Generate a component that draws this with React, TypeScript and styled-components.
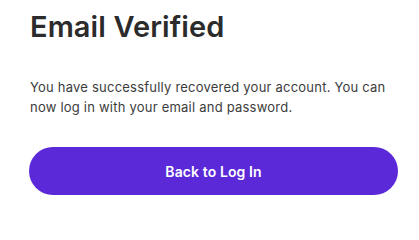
import React from "react";
import styled, { createGlobalStyle } from "styled-components";

const Global = createGlobalStyle`
  html, body { margin: 0; padding: 0; background: #ffffff; }
  body { font-family: Inter, "Noto Sans", sans-serif; -webkit-font-smoothing: antialiased; }
`;

const Page = styled.main`
  display: flex;
  flex-direction: column;
  width: 369px;
  padding: 9px 0 0 29px;
`;

const Title = styled.h1`
  margin: 0 0 0 1px;
  font-size: 29px;
  line-height: 36px;
  font-weight: 600;
  color: #2b2b2b;
  letter-spacing: 0.1px;
`;

const Message = styled.p`
  margin: 32px 0 0 1px;
  font-size: 13px;
  line-height: 20px;
  font-weight: 400;
  color: #3c3c3c;
  letter-spacing: 0.22px;
`;

const PrimaryButton = styled.button`
  margin-top: 30px;
  height: 48px;
  width: 100%;
  border: none;
  border-radius: 999px;
  background: #5b29d8;
  color: #ffffff;
  font-family: Inter, "Noto Sans", sans-serif;
  font-size: 14px;
  font-weight: 600;
  letter-spacing: 0.1px;
  cursor: pointer;
`;

export default function App() {
  return (
    <>
      <Global />
      <Page>
        <Title>Email Verified</Title>
        <Message>
          You have successfully recovered your account. You can now log in with your email and password.
        </Message>
        <PrimaryButton>Back to Log In</PrimaryButton>
      </Page>
    </>
  );
}
